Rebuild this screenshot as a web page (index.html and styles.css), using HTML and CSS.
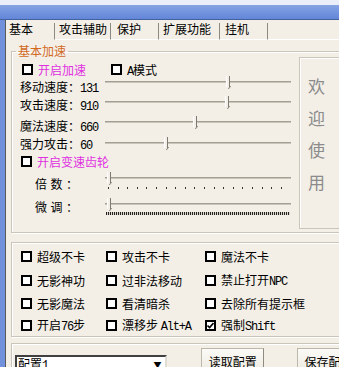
FILE: index.html
```html
<!DOCTYPE html>
<html lang="zh">
<head>
    <meta charset="UTF-8">
    <link rel="stylesheet" href="styles.css">
    <title>基本加速</title>
</head>
<body>
    <div class="topline"></div>
    <div class="titlebar"></div>
    <div class="window">
        <div class="frame">
            <div class="tabs">
                <div class="tab sel t1">基本</div>
                <div class="tab t2">攻击辅助</div>
                <div class="tab t3">保护</div>
                <div class="tab t4">扩展功能</div>
                <div class="tab t5">挂机</div>
                <div class="tabfill"></div>
            </div>
            <div class="page">
                <!-- speed group -->
                <fieldset class="group g1">
                    <legend>基本加速</legend>
                    <div class="g1body">
                        <div class="speeds">
                            <div class="row rcb">
                                <label class="chk pink first"><span class="box"></span><span>开启加速</span></label>
                                <label class="chk amode"><span class="box"></span><span><span class="en">A</span>模式</span></label>
                            </div>
                            <div class="row ra">
                                <span class="lbl">移动速度：<span class="en">131</span></span>
                                <div class="slider"><div class="track"></div><i class="thumb" style="left:121px"></i></div>
                            </div>
                            <div class="row rb">
                                <span class="lbl">攻击速度：<span class="en">910</span></span>
                                <div class="slider"><div class="track"></div><i class="thumb" style="left:120px"></i></div>
                            </div>
                            <div class="row rc">
                                <span class="lbl">魔法速度：<span class="en">660</span></span>
                                <div class="slider"><div class="track"></div><i class="thumb" style="left:88px"></i></div>
                            </div>
                            <div class="row rd">
                                <span class="lbl">强力攻击：<span class="en">60</span></span>
                                <div class="slider"><div class="track"></div><i class="thumb" style="left:59px"></i></div>
                            </div>
                            <div class="row re">
                                <label class="chk pink"><span class="box"></span><span>开启变速齿轮</span></label>
                            </div>
                            <div class="row rf">
                                <span class="lbl sub">倍数：</span>
                                <div class="slider"><div class="track"></div><i class="thumb" style="left:2px"></i><div class="ticks"></div></div>
                            </div>
                            <div class="row rg">
                                <span class="lbl sub">微调：</span>
                                <div class="slider"><div class="track"></div><i class="thumb" style="left:2px"></i><div class="ticks dense"></div></div>
                            </div>
                        </div>
                        <div class="welcome">欢<br>迎<br>使<br>用</div>
                    </div>
                </fieldset>

                <!-- options -->
                <fieldset class="group g2">
                    <div class="opts">
                        <label class="chk"><span class="box"></span><span>超级不卡</span></label>
                        <label class="chk"><span class="box"></span><span>攻击不卡</span></label>
                        <label class="chk"><span class="box"></span><span>魔法不卡</span></label>
                        <label class="chk"><span class="box"></span><span>无影神功</span></label>
                        <label class="chk"><span class="box"></span><span>过非法移动</span></label>
                        <label class="chk"><span class="box"></span><span>禁止打开<span class="en">NPC</span></span></label>
                        <label class="chk"><span class="box"></span><span>无影魔法</span></label>
                        <label class="chk"><span class="box"></span><span>看清暗杀</span></label>
                        <label class="chk"><span class="box"></span><span>去除所有提示框</span></label>
                        <label class="chk"><span class="box"></span><span>开启<span class="en">76</span>步</span></label>
                        <label class="chk"><span class="box"></span><span>漂移步 <span class="en">Alt+A</span></span></label>
                        <label class="chk"><span class="box"><svg width="7" height="7" viewBox="0 0 7 7"><path d="M0.5 3.5 L2.6 5.6 L6.5 1" stroke="#000" stroke-width="1.6" fill="none"/></svg></span><span>强制<span class="en">Shift</span></span></label>
                    </div>
                </fieldset>

                <!-- config -->
                <fieldset class="group g3">
                    <div class="cfg">
                        <div class="combo"><span>配置<span class="en">1</span></span><span class="arrow">▼</span></div>
                        <div class="btn">读取配置</div>
                        <div class="btn">保存配置</div>
                    </div>
                </fieldset>
            </div>
        </div>
    </div>
</body>
</html>
```

FILE: styles.css
```css
* {
    box-sizing: border-box;
}
body {
    margin: 0;
    width: 339px;
    height: 367px;
    overflow: hidden;
    background-color: #f3efe7;
    color: #000;
    font-family: "Noto Sans CJK SC", sans-serif;
    font-size: 12px;
}
.en {
    font-family: "Liberation Mono", monospace;
    font-size: 12px;
    letter-spacing: -1.2px;
}
.topline {
    height: 5px;
    background-color: #e9eef8;
}
.titlebar {
    height: 15px;
    background: linear-gradient(#86a3e4, #6286d8);
    border-bottom: 1px solid #45629f;
}
.window {
    border-left: 5px solid #7191dc;
}
.frame {
    border-left: 1px solid #5a5a5a;
}

/* tabs */
.tabs {
    display: flex;
    align-items: flex-end;
    height: 20px;
}
.tab {
    height: 17px;
    line-height: 12px;
    border-bottom: 1px solid #fff;
    border-right: 1px solid #8d8a82;
    white-space: nowrap;
}
.tab.sel {
    border-bottom-color: transparent;
}
.t1 { width: 49px; padding-left: 3px; }
.t2 { width: 56px; padding-left: 4px; }
.t3 { width: 48px; padding-left: 6px; }
.t4 { width: 61px; padding-left: 4px; }
.t5 { width: 48px; padding-left: 5px; }
.tabfill {
    flex: 1;
    height: 20px;
    border-bottom: 1px solid #fff;
}

.page {
    padding-left: 5px;
}

/* group boxes */
.group {
    width: 350px;
    margin: 0;
    padding: 0;
    border: 1px solid #c9c5b9;
    box-shadow: inset 1px 1px 0 #fff, 1px 1px 0 #fff;
    min-width: 0;
}
.group legend {
    margin-left: 4px;
    padding: 0 2px;
    line-height: 12px;
    color: #d2691e;
}
.g1 {
    margin-top: 5px;
    padding-bottom: 3px;
}
.g1body {
    display: flex;
}
.speeds {
    width: 287px;
    padding: 4px 0 0 8px;
}
.row {
    display: flex;
    align-items: center;
}
.rcb { height: 17px; }
.ra { height: 17px; }
.rb { height: 20px; }
.rc { height: 21px; }
.rd { height: 15px; }
.re { height: 20px; }
.rf { height: 24px; }
.rg { height: 22px; }
.ra .slider { margin-bottom: 7px; }
.rb .slider { margin-bottom: 4px; }
.rc .slider { margin-bottom: 5px; }
.rf .slider { margin-bottom: 8px; }
.rg .slider { margin-bottom: 2px; }

.lbl {
    width: 85px;
    flex: none;
    white-space: nowrap;
}
.lbl.sub {
    padding-left: 15px;
    letter-spacing: 3.5px;
}

/* trackbars */
.slider {
    position: relative;
    width: 186px;
    height: 14px;
    flex: none;
}
.track {
    position: absolute;
    left: 0;
    right: 0;
    top: 5px;
    height: 2px;
    background-color: #a29f95;
    border-bottom: 1px solid #c9c5ba;
}
.thumb {
    position: absolute;
    top: 0;
    width: 4px;
    height: 11px;
    background-color: #f3efe7;
    border-left: 1px solid #fff;
    border-right: 1px solid #7d7a71;
}
.thumb::after {
    content: "";
    position: absolute;
    left: -1px;
    top: 10px;
    width: 3px;
    height: 3px;
    border-right: 1px solid #7d7a71;
    transform: skewX(-35deg);
}
.ticks {
    position: absolute;
    left: 3px;
    right: 1px;
    top: 15px;
    height: 2px;
    background: repeating-linear-gradient(to right, #333 0 1px, transparent 1px 9.6px);
}
.ticks.dense {
    top: 14px;
    height: 3px;
    left: 1px;
    background: repeating-linear-gradient(to right, #222 0 1px, #d8d4ca 1px 2px);
}

.welcome {
    width: 60px;
    height: 172px;
    padding: 12px 0 0 8px;
    border: 1px solid #c9c5b9;
    box-shadow: inset 1px 1px 0 #fff;
    color: #8b8b8b;
    font-size: 17px;
    line-height: 32px;
}

/* checkboxes */
.chk {
    display: flex;
    align-items: center;
    gap: 5px;
    white-space: nowrap;
}
.box {
    width: 11px;
    height: 11px;
    flex: none;
    border: 2px solid #000;
    background-color: #fff;
    display: flex;
}
.pink {
    color: #e030e0;
}
.rcb .first {
    margin-left: 2px;
}
.rcb .amode {
    margin-left: 25px;
}
.re .chk {
    margin-left: 1px;
}

.g2 {
    margin-top: 9px;
    padding: 2px 0 0 9px;
}
.opts {
    display: grid;
    grid-template-columns: 85px 99px auto;
    grid-template-rows: 23px 24px 22px 22px;
    align-items: center;
}

/* config bar */
.g3 {
    margin-top: 6px;
    padding-left: 3px;
}
.cfg {
    display: flex;
    align-items: flex-start;
}
.combo {
    width: 153px;
    height: 21px;
    margin-top: 11px;
    display: flex;
    justify-content: space-between;
    background-color: #fff;
    border: 2px solid #404040;
    border-right-color: #e0ddd4;
    border-bottom-color: #e0ddd4;
    padding-left: 1px;
    line-height: 14px;
}
.arrow {
    width: 16px;
    font-size: 8px;
    text-align: center;
    line-height: 16px;
}
.btn {
    width: 63px;
    height: 28px;
    margin-top: 4px;
    margin-left: 34px;
    border: 1px solid #bcb8ab;
    border-right-color: #8f8b80;
    background: linear-gradient(#fbfaf6, #ece8de);
    text-align: center;
    line-height: 26px;
}
.btn + .btn {
    margin-left: 33px;
}
```
